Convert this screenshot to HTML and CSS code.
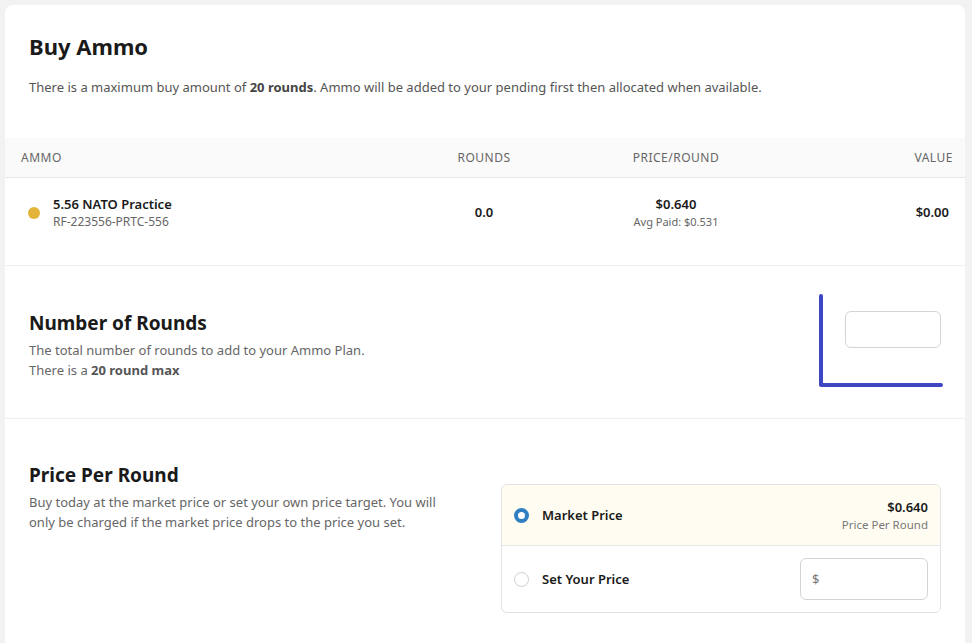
FILE: index.html
```html
<!DOCTYPE html>
<html lang="en">

<head>
    <meta charset="UTF-8">
    <meta name="viewport" content="width=device-width, initial-scale=1.0">
    <title>Buy Ammo</title>
    <link rel="stylesheet" href="styles.css">
</head>

<body>
    <div class="buy-card">
        <div class="buy-header">
            <h1>Buy Ammo</h1>
            <p>There is a maximum buy amount of <b>20 rounds</b>. Ammo will be added to your pending first then allocated when available.</p>
        </div>

        <table class="ammo-table">
            <thead>
                <tr>
                    <th class="col-ammo">Ammo</th>
                    <th class="col-rounds">Rounds</th>
                    <th class="col-price">Price/Round</th>
                    <th class="col-value">Value</th>
                </tr>
            </thead>
            <tbody>
                <tr>
                    <td class="col-ammo">
                        <div class="ammo-name">
                            <span class="dot"></span>
                            <div>
                                <div class="name">5.56 NATO Practice</div>
                                <div class="sku">RF-223556-PRTC-556</div>
                            </div>
                        </div>
                    </td>
                    <td class="col-rounds strong">0.0</td>
                    <td class="col-price">
                        <div class="strong">$0.640</div>
                        <div class="avg">Avg Paid: $0.531</div>
                    </td>
                    <td class="col-value strong">$0.00</td>
                </tr>
            </tbody>
        </table>

        <div class="section rounds-section">
            <div class="section-text">
                <h2>Number of Rounds</h2>
                <p>The total number of rounds to add to your Ammo Plan.<br>There is a <b>20 round max</b></p>
            </div>
            <input type="text" class="rounds-input">
            <svg class="mark" width="130" height="96" viewBox="0 0 130 96">
                <path d="M4 4 L4 93 L124 93" fill="none" stroke="#3e46c4" stroke-width="4" stroke-linecap="round" stroke-linejoin="round" />
            </svg>
        </div>

        <div class="section price-section">
            <div class="section-text">
                <h2>Price Per Round</h2>
                <p>Buy today at the market price or set your own price target. You will only be charged if the market price drops to the price you set.</p>
            </div>
            <div class="price-options">
                <label class="option selected">
                    <span class="radio checked"></span>
                    <span class="option-label">Market Price</span>
                    <span class="option-right">
                        <span class="strong">$0.640</span>
                        <span class="muted">Price Per Round</span>
                    </span>
                </label>
                <label class="option">
                    <span class="radio"></span>
                    <span class="option-label">Set Your Price</span>
                    <span class="option-right">
                        <input type="text" class="price-input" placeholder="$">
                    </span>
                </label>
            </div>
        </div>
    </div>
</body>

</html>
```

FILE: styles.css
```css
body {
    font-family: "Noto Sans", "Open Sans", sans-serif;
    background-color: #f2f2f2;
    margin: 0;
    padding: 5px 7px 0 5px;
    color: #1a1a1a;
}

.buy-card {
    background-color: white;
    border-radius: 8px 8px 0 0;
    min-height: 640px;
}

.buy-header {
    padding: 27px 24px 42px 24px;
}

.buy-header h1 {
    font-size: 22px;
    font-weight: 700;
    margin: 0 0 18px 0;
    line-height: 28px;
}

.buy-header p {
    font-size: 13px;
    color: #555;
    margin: 0;
    line-height: 18px;
}

.buy-header b {
    color: #444;
}

.ammo-table {
    width: 100%;
    border-collapse: collapse;
}

.ammo-table th {
    background-color: #fafafa;
    font-size: 12px;
    font-weight: 400;
    color: #666;
    text-transform: uppercase;
    letter-spacing: 0.5px;
    height: 39px;
    padding: 0;
    border-bottom: 1px solid #e6e6e6;
}

.ammo-table td {
    height: 88px;
    box-sizing: border-box;
    vertical-align: top;
    padding: 0;
    font-size: 13px;
    border-bottom: 1px solid #f0f0f0;
}

.col-ammo {
    text-align: left;
    padding-left: 16px !important;
    width: 384px;
}

.col-rounds {
    text-align: center;
    width: 158px;
}

.col-price {
    text-align: center;
    width: 226px;
}

.col-value {
    text-align: right;
}

th.col-value {
    padding-right: 12px !important;
}

td.col-value {
    padding-right: 16px !important;
}

td.col-ammo {
    padding-top: 17px !important;
}

td.col-rounds,
td.col-value {
    padding-top: 24px !important;
    line-height: 20px;
}

td.col-price {
    padding-top: 16px !important;
}

.ammo-name {
    display: flex;
    align-items: center;
    gap: 13px;
    padding-left: 7px;
}

.dot {
    width: 12px;
    height: 12px;
    border-radius: 50%;
    background-color: #e3b437;
}

.name {
    font-weight: 600;
    line-height: 18px;
}

.sku {
    font-size: 12px;
    color: #666;
    line-height: 18px;
}

.strong {
    font-weight: 600;
}

.avg {
    font-size: 11px;
    color: #666;
    line-height: 16px;
}

td.col-price .strong {
    line-height: 20px;
}

.section {
    display: flex;
    align-items: flex-start;
    padding: 0 24px;
    border-bottom: 1px solid #f0f0f0;
    position: relative;
}

.section h2 {
    font-size: 19px;
    font-weight: 700;
    margin: 0 0 4px 0;
    line-height: 26px;
}

.section p {
    font-size: 13px;
    color: #666;
    margin: 0;
    line-height: 20px;
}

.section b {
    color: #555;
}

.rounds-section {
    height: 152px;
    align-items: center;
}

.rounds-section .section-text {
    flex: 1;
    margin-top: 6px;
}

.rounds-input {
    width: 96px;
    height: 37px;
    box-sizing: border-box;
    border: 1px solid #d4d4d4;
    border-radius: 6px;
    margin-top: -26px;
}

.mark {
    position: absolute;
    left: 812px;
    top: 26px;
}

.price-section {
    border-bottom: none;
    padding-top: 43px;
    gap: 54px;
}

.price-section .section-text {
    width: 418px;
}

.price-options {
    flex: 1;
    border: 1px solid #e2e2e2;
    border-radius: 6px;
    margin-top: 22px;
    overflow: hidden;
}

.option {
    display: flex;
    align-items: center;
    padding: 0 12px 0 12px;
    font-size: 13px;
}

.option.selected {
    background-color: #fffdf2;
    height: 60px;
    border-bottom: 1px solid #e6e6e6;
}

.option:not(.selected) {
    height: 66px;
}

.radio {
    width: 15px;
    height: 15px;
    border-radius: 50%;
    border: 1px solid #cfcfcf;
    box-sizing: border-box;
    background-color: white;
    margin-right: 13px;
}

.radio.checked {
    border: 4px solid #2f7fc2;
}

.option-label {
    flex: 1;
    font-weight: 600;
}

.option-right {
    display: flex;
    flex-direction: column;
    align-items: flex-end;
}

.option-right .strong {
    line-height: 20px;
}

.muted {
    font-size: 11.5px;
    color: #777;
    line-height: 16px;
}

.price-input {
    width: 128px;
    height: 42px;
    box-sizing: border-box;
    border: 1px solid #d4d4d4;
    border-radius: 6px;
    padding-left: 11px;
    font-family: inherit;
    font-size: 13px;
}

.price-input::placeholder {
    color: #777;
}
```
